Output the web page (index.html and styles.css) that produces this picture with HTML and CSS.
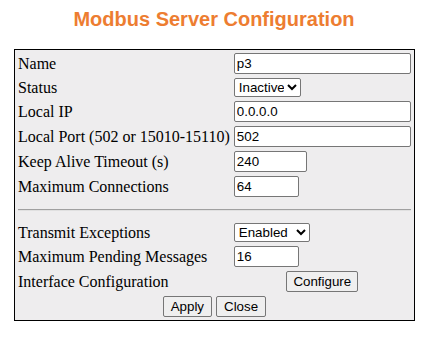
FILE: index.html
```html
<!DOCTYPE html>
<html lang="en">
  <head>
    <meta charset="UTF-8" />
    <meta name="viewport" content="width=device-width, initial-scale=1.0" />
    <link rel="stylesheet" href="styles.css">
    <title>Modbus Server Configuration</title>
  </head>
  <body>
    <div class="page">
      <h1 class="title">Modbus Server Configuration</h1>
      <table class="config">
        <tr>
          <td class="config__label">Name</td>
          <td><input type="text" class="field field--wide" value="p3"></td>
        </tr>
        <tr>
          <td class="config__label">Status</td>
          <td>
            <select class="field field--status">
              <option>Active</option>
              <option selected>Inactive</option>
            </select>
          </td>
        </tr>
        <tr>
          <td class="config__label">Local IP</td>
          <td><input type="text" class="field field--wide" value="0.0.0.0"></td>
        </tr>
        <tr>
          <td class="config__label">Local Port (502 or 15010-15110)</td>
          <td><input type="text" class="field field--wide" value="502"></td>
        </tr>
        <tr>
          <td class="config__label">Keep Alive Timeout (s)</td>
          <td><input type="text" class="field field--medium" value="240"></td>
        </tr>
        <tr>
          <td class="config__label">Maximum Connections</td>
          <td><input type="text" class="field field--short" value="64"></td>
        </tr>
        <tr>
          <td colspan="2"><hr class="config__sep"></td>
        </tr>
        <tr>
          <td class="config__label">Transmit Exceptions</td>
          <td>
            <select class="field field--enabled">
              <option selected>Enabled</option>
              <option>Disabled</option>
            </select>
          </td>
        </tr>
        <tr>
          <td class="config__label">Maximum Pending Messages</td>
          <td><input type="text" class="field field--short" value="16"></td>
        </tr>
        <tr>
          <td class="config__label">Interface Configuration</td>
          <td class="config__center"><button type="button" class="btn">Configure</button></td>
        </tr>
        <tr>
          <td colspan="2" class="config__center">
            <button type="button" class="btn btn--wide">Apply</button>
            <button type="button" class="btn btn--wide">Close</button>
          </td>
        </tr>
      </table>
    </div>
  </body>
</html>
```

FILE: styles.css
```css
body {
  margin: 8px;
  background: #fff;
  font-family: "Liberation Serif", "Times New Roman", serif;
  font-size: 16px;
  color: #000;
}
.page {
  width: 400px;
  padding-left: 6px;
}
.title {
  margin: 0 0 18px;
  font-family: "Liberation Sans", Arial, sans-serif;
  font-size: 20px;
  line-height: 23px;
  font-weight: bold;
  color: #ed7d31;
  text-align: center;
}
.config {
  width: 400px;
  border: 1px solid #000;
  border-spacing: 2px;
  background: #eeedee;
}
.config td {
  padding: 1px;
  vertical-align: middle;
}
.config__label {
  white-space: nowrap;
}
.config__center {
  text-align: center;
}
.config__sep {
  margin: 8px 0;
  border: 0;
  border-top: 1px solid #a0a0a0;
  border-bottom: 1px solid #e0e0e0;
}
.field,
.btn {
  font-family: "Liberation Sans", Arial, sans-serif;
  font-size: 13.33px;
  color: #000;
}
.field {
  box-sizing: border-box;
  margin: 0;
}
input.field {
  height: 21px;
  padding: 1px 2px;
  border: 1px solid #767676;
  border-radius: 2px;
  background: #fff;
}
select.field {
  height: 19px;
  padding: 0;
  border: 1px solid #767676;
  border-radius: 2px;
  background-color: #fff;
}
.field--wide {
  width: 177px;
}
.field--medium {
  width: 73px;
}
.field--short {
  width: 65px;
}
.field--status {
  width: 67px;
}
.field--enabled {
  width: 76px;
}
.btn {
  margin: 0;
  padding: 1px 6px;
  height: 21px;
  border: 1px solid #767676;
  border-radius: 2px;
  background: #efefef;
}
.btn--wide {
  padding: 1px 7px;
}
```
